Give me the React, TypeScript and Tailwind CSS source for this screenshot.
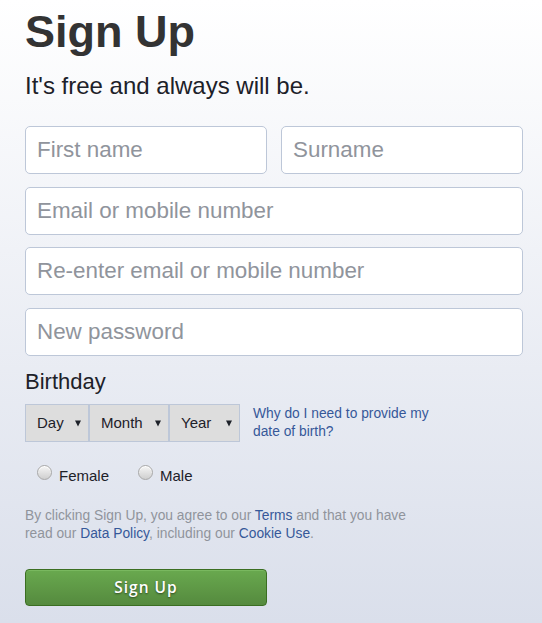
const inputClass =
  "h-[48px] rounded-[5px] border border-[#bdc7d8] bg-white px-[11px] text-[22.4px] text-[#1d2129] outline-none placeholder:text-[#90949c]"

const Caret = () => (
  <svg width="6" height="7" viewBox="0 0 6 7" className="shrink-0">
    <path d="M0 0.5 L6 0.5 L3 6.5 Z" fill="#1d2129" />
  </svg>
)

const DateSelect = ({ label, width }: { label: string; width: string }) => (
  <div
    className={`flex h-[38px] items-center justify-between border border-[#bdc7d8] bg-[#dddddd] pl-[11px] pr-[7px] text-[15px] text-[#1d2129] ${width}`}
  >
    <span>{label}</span>
    <Caret />
  </div>
)

const Radio = ({ label }: { label: string }) => (
  <label className="flex items-start">
    <span className="-mt-[2px] h-[15px] w-[15px] rounded-full border border-[#a8a8a8] bg-gradient-to-b from-[#f6f6f6] to-[#cfcfcf] shadow-[inset_0_1px_0_#fff]" />
    <span className="ml-[7px]">{label}</span>
  </label>
)

export default function App() {
  return (
    <div className="min-h-screen bg-gradient-to-b from-white to-[#dadfeb] pl-[25px] pt-[5px] font-['Liberation_Sans',Arial,sans-serif]">
      <div className="w-[498px]">
        {/* Title */}
        <h1 className="text-[45px] font-bold leading-[54px] text-[#333333]">Sign Up</h1>
        <p className="mt-[13px] text-[24px] leading-[28px] text-[#1d2129]">
          It's free and always will be.
        </p>

        <form className="mt-[26px]">
          <div className="flex gap-[14px]">
            <input className={`${inputClass} w-[242px]`} placeholder="First name" />
            <input className={`${inputClass} w-[242px]`} placeholder="Surname" />
          </div>
          <input className={`${inputClass} mt-[13px] w-full`} placeholder="Email or mobile number" />
          <input
            className={`${inputClass} mt-[12px] w-full`}
            placeholder="Re-enter email or mobile number"
          />
          <input
            className={`${inputClass} mt-[13px] w-full`}
            type="password"
            placeholder="New password"
          />

          {/* Birthday */}
          <div className="mt-[14px] text-[22px] leading-[24px] text-[#1d2129]">Birthday</div>
          <div className="mt-[10px] flex items-start">
            <div className="flex">
              <DateSelect label="Day" width="w-[64px]" />
              <DateSelect label="Month" width="w-[80px]" />
              <DateSelect label="Year" width="w-[71px]" />
            </div>
            <a className="ml-[13px] mt-[1px] w-[182px] text-[13.8px] leading-[18px] text-[#365899]">
              Why do I need to provide my date of birth?
            </a>
          </div>

          {/* Gender */}
          <div className="ml-[12px] mt-[25px] flex gap-[29px] text-[15px] leading-[18px] text-[#1d2129]">
            <Radio label="Female" />
            <Radio label="Male" />
          </div>

          <p className="mt-[22px] w-[400px] text-[13.8px] leading-[18px] text-[#90949c]">
            By clicking Sign Up, you agree to our <a className="text-[#365899]">Terms</a> and that
            you have read our <a className="text-[#365899]">Data Policy</a>, including our{" "}
            <a className="text-[#365899]">Cookie Use</a>.
          </p>

          <button
            type="button"
            className="mt-[26px] flex h-[37px] w-[242px] items-center justify-center rounded-[4px] border border-[#3b6e22] bg-gradient-to-b from-[#69a94f] to-[#558a3e] font-['Open_Sans',sans-serif] text-[15.5px] font-semibold tracking-[1px] text-white shadow-[inset_0_1px_0_#79b85f] [text-shadow:0_1px_2px_rgba(0,0,0,0.5)]"
          >
            Sign Up
          </button>
        </form>
      </div>
    </div>
  )
}
